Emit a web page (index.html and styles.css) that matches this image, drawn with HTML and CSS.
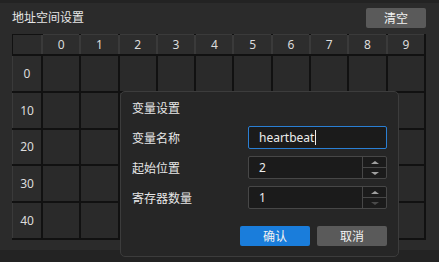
FILE: index.html
```html
<html>
<head>
    <title>地址空间设置</title>
    <link rel="stylesheet" href="styles.css">
</head>
<body>

<div class="panel">
    <div class="panel-head">
        <span class="panel-title">地址空间设置</span>
        <button class="btn btn-grey btn-clear">清空</button>
    </div>

    <div class="grid">
        <div class="corner"></div>
        <div class="col-head">0</div>
        <div class="col-head">1</div>
        <div class="col-head">2</div>
        <div class="col-head">3</div>
        <div class="col-head">4</div>
        <div class="col-head">5</div>
        <div class="col-head">6</div>
        <div class="col-head">7</div>
        <div class="col-head">8</div>
        <div class="col-head">9</div>

        <div class="row-head">0</div>
        <div class="cell"></div><div class="cell"></div><div class="cell"></div><div class="cell"></div><div class="cell"></div>
        <div class="cell"></div><div class="cell"></div><div class="cell"></div><div class="cell"></div><div class="cell"></div>

        <div class="row-head">10</div>
        <div class="cell"></div><div class="cell"></div><div class="cell"></div><div class="cell"></div><div class="cell"></div>
        <div class="cell"></div><div class="cell"></div><div class="cell"></div><div class="cell"></div><div class="cell"></div>

        <div class="row-head">20</div>
        <div class="cell"></div><div class="cell"></div><div class="cell"></div><div class="cell"></div><div class="cell"></div>
        <div class="cell"></div><div class="cell"></div><div class="cell"></div><div class="cell"></div><div class="cell"></div>

        <div class="row-head">30</div>
        <div class="cell"></div><div class="cell"></div><div class="cell"></div><div class="cell"></div><div class="cell"></div>
        <div class="cell"></div><div class="cell"></div><div class="cell"></div><div class="cell"></div><div class="cell"></div>

        <div class="row-head">40</div>
        <div class="cell"></div><div class="cell"></div><div class="cell"></div><div class="cell"></div><div class="cell"></div>
        <div class="cell"></div><div class="cell"></div><div class="cell"></div><div class="cell"></div><div class="cell"></div>
    </div>
</div>

<div class="dialog">
    <div class="dialog-title">变量设置</div>

    <div class="form">
        <div class="form-row">
            <span class="label">变量名称</span>
            <div class="field field-focus">
                <span class="field-text">heartbeat</span><span class="caret"></span>
            </div>
        </div>
        <div class="form-row">
            <span class="label">起始位置</span>
            <div class="field spin">
                <span class="field-text">2</span>
                <div class="spin-btns">
                    <div class="spin-btn"><span class="arrow-up"></span></div>
                    <div class="spin-btn"><span class="arrow-down"></span></div>
                </div>
            </div>
        </div>
        <div class="form-row">
            <span class="label">寄存器数量</span>
            <div class="field spin">
                <span class="field-text">1</span>
                <div class="spin-btns">
                    <div class="spin-btn"><span class="arrow-up"></span></div>
                    <div class="spin-btn"><span class="arrow-down disabled"></span></div>
                </div>
            </div>
        </div>
    </div>

    <div class="dialog-actions">
        <button class="btn btn-blue">确认</button>
        <button class="btn btn-grey">取消</button>
    </div>
</div>

</body>
</html>
```

FILE: styles.css
```css
body {
    margin: 0;
    background-color: #232323;
    font-family: "Noto Sans", "Noto Sans CJK SC", sans-serif;
    font-size: 12px;
    color: #e2e2e2;
    width: 439px;
    height: 262px;
    overflow: hidden;
    position: relative;
}

.panel {
    margin-top: 3px;
    height: 247px;
    background-color: #2b2b2b;
    padding: 5px 13px 0 12px;
    box-sizing: border-box;
}

.panel-head {
    height: 20px;
    display: flex;
    align-items: center;
    justify-content: space-between;
}

.panel-title {
    color: #e6e6e6;
    line-height: 20px;
}

.btn {
    border: none;
    border-radius: 2px;
    color: #f2f2f2;
    font-family: "Noto Sans CJK SC", sans-serif;
    font-size: 12px;
    height: 20px;
    width: 70px;
    padding: 0;
    line-height: 20px;
}

.btn-clear {
    width: 60px;
}

.btn-grey {
    background-color: #5a5a5a;
}

.btn-blue {
    background-color: #1a7ddb;
}

.grid {
    margin-top: 6px;
    width: 414px;
    height: 206px;
    display: grid;
    grid-template-columns: 28px repeat(10, 1fr);
    grid-template-rows: 19px repeat(5, 1fr);
    gap: 2px;
    padding: 1px 2px 2px 1px;
    background-color: #111;
    box-sizing: border-box;
}

.corner {
    background-color: #2c2c2c;
}

.col-head {
    background-color: #2d2d2d;
    box-shadow: -2px 0 0 #3a3a3a, 0 -1px 0 #3a3a3a;
    display: flex;
    align-items: center;
    justify-content: center;
    color: #dcdcdc;
}

.row-head {
    background-color: #2c2c2c;
    box-shadow: -1px 0 0 #3a3a3a;
    display: flex;
    align-items: center;
    justify-content: center;
    color: #dcdcdc;
}

.cell {
    background-color: #2a2a2a;
}

/* dialog floats over the grid */
.dialog {
    position: absolute;
    left: 120px;
    top: 91px;
    width: 279px;
    height: 166px;
    box-sizing: border-box;
    background-color: #262626;
    border: 1px solid #3c3c3c;
    border-radius: 5px;
    padding: 8px 11px 10px 11px;
}

.dialog-title {
    line-height: 18px;
    height: 18px;
    color: #e6e6e6;
}

.form {
    margin-top: 8px;
    display: flex;
    flex-direction: column;
    gap: 7px;
}

.form-row {
    display: flex;
    align-items: center;
    justify-content: space-between;
    height: 23px;
}

.label {
    color: #e6e6e6;
}

.field {
    width: 139px;
    height: 23px;
    box-sizing: border-box;
    background-color: #1b1b1b;
    border: 1px solid #474747;
    border-radius: 2px;
    display: flex;
    align-items: center;
    padding-left: 10px;
    color: #ececec;
    position: relative;
}

.field-focus {
    border-color: #2a7fd4;
}

.caret {
    width: 1px;
    height: 15px;
    background-color: #f0f0f0;
    margin-left: 1px;
}

.spin-btns {
    margin-left: auto;
    width: 23px;
    height: 100%;
    border-left: 1px solid #474747;
    display: flex;
    flex-direction: column;
}

.spin-btn {
    flex: 1;
    display: flex;
    align-items: center;
    justify-content: center;
}

.spin-btn + .spin-btn {
    border-top: 1px solid #474747;
}

.arrow-up {
    width: 0;
    height: 0;
    border-left: 4px solid transparent;
    border-right: 4px solid transparent;
    border-bottom: 3px solid #a0a0a0;
}

.arrow-down {
    width: 0;
    height: 0;
    border-left: 4px solid transparent;
    border-right: 4px solid transparent;
    border-top: 3px solid #a0a0a0;
}

.arrow-down.disabled {
    border-top-color: #4a4a4a;
}

.dialog-actions {
    margin-top: 17px;
    display: flex;
    justify-content: flex-end;
    gap: 7px;
}
```
